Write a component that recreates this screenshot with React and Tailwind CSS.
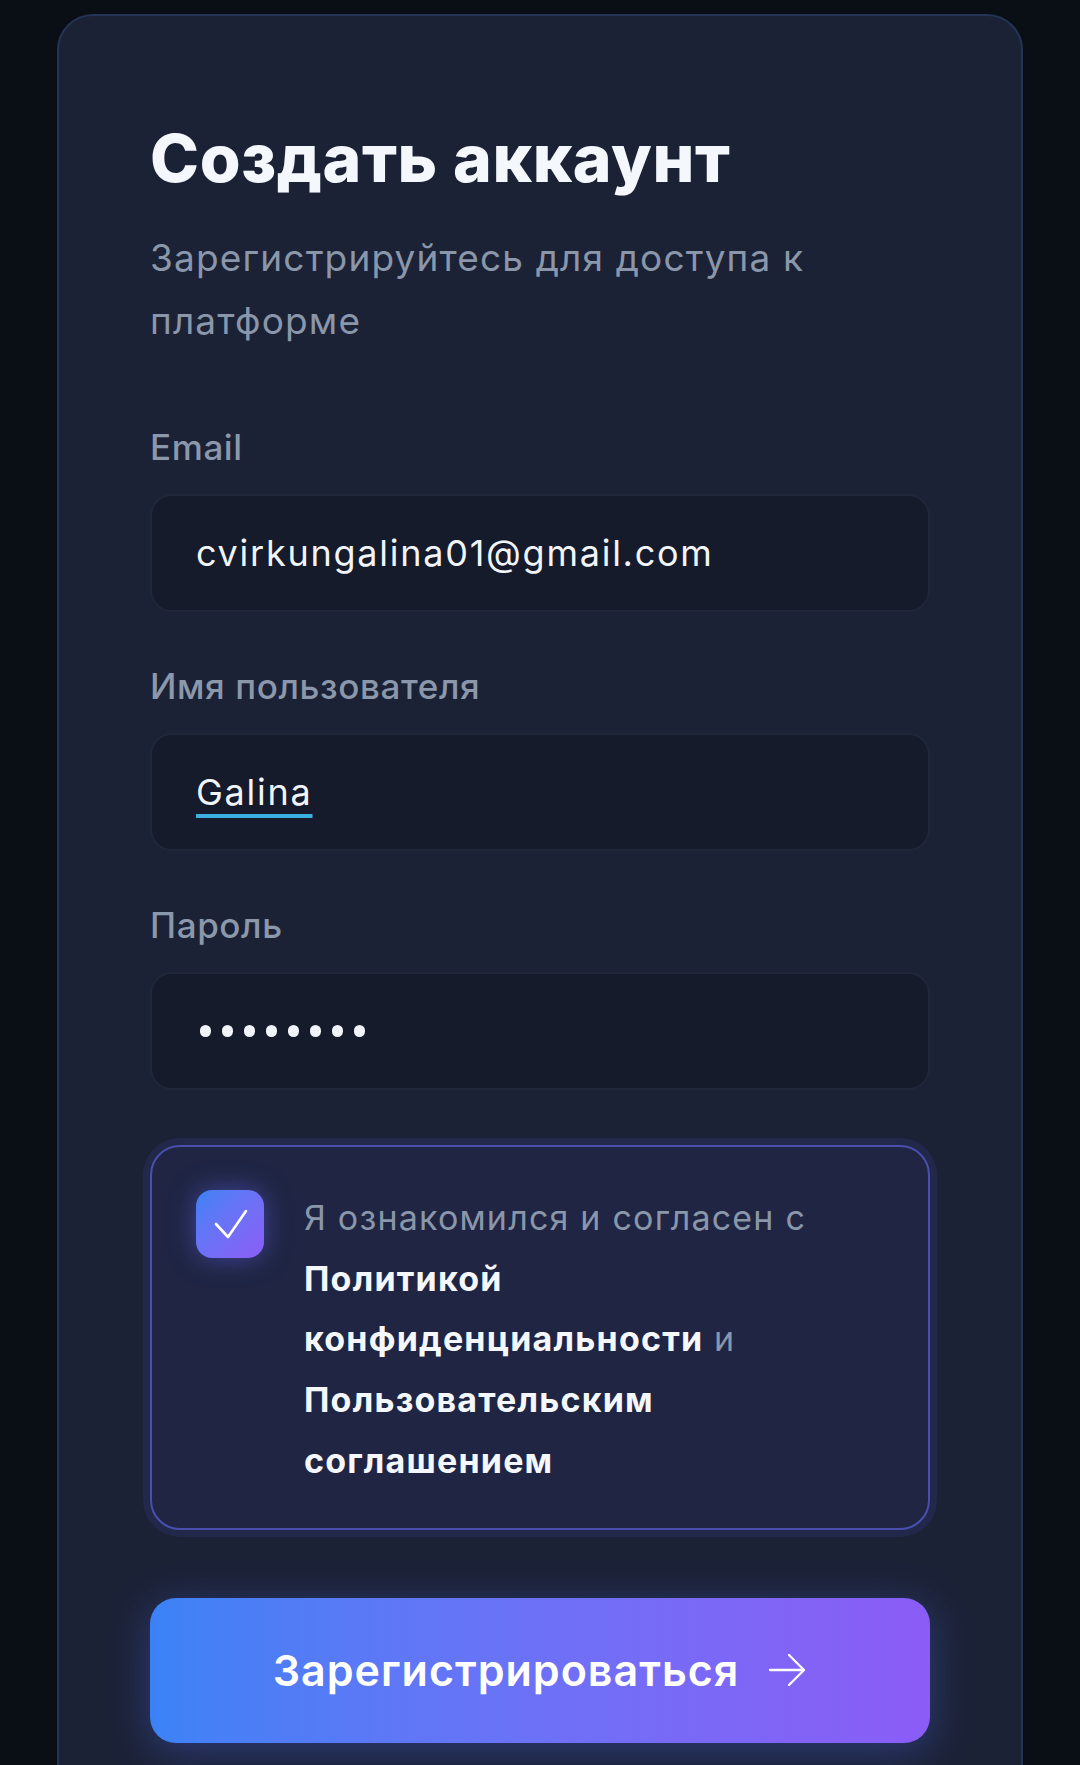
import React from "react";

function Label({ children }) {
  return (
    <div className="h-[44px] flex items-center text-[35px] leading-none tracking-[0.6px] text-[#8b97aa] font-medium">
      {children}
    </div>
  );
}

function Field({ label, children, className = "" }) {
  return (
    <div className={className}>
      <Label>{label}</Label>
      <div className="mt-[25px] h-[118px] rounded-[22px] border-2 border-[#1f2739] bg-[#151b2b] pl-[44px] flex items-center text-[36px] tracking-[1.75px] text-[#f1f5f9]">
        {children}
      </div>
    </div>
  );
}

export default function App() {
  return (
    <div
      className="h-[1765px] overflow-hidden bg-[#0a0e15] px-[57px] pt-[14px]"
      style={{ fontFamily: "Inter, 'Noto Sans', sans-serif" }}
    >
      <div className="h-[1800px] rounded-[36px] border-2 border-[#233454] bg-[#1c2236] px-[91px] pt-[109px]">
        <h1 className="text-[66px] leading-none font-extrabold tracking-[0.6px] text-[#f4f7fb]">
          Создать аккаунт
        </h1>
        <p className="mt-[35px] text-[37px] leading-[63px] tracking-[1.15px] text-[#8a96a9]">
          Зарегистрируйтесь для доступа к платформе
        </p>

        <Field label="Email" className="mt-[73px]">
          cvirkungalina01@gmail.com
        </Field>

        <Field label="Имя пользователя" className="mt-[52px]">
          <span className="underline decoration-[#3ab0e0] decoration-[4px] underline-offset-[9px]">
            Galina
          </span>
        </Field>

        <Field label="Пароль" className="mt-[52px]">
          <div className="flex gap-[11px] pl-[4px]">
            {Array.from({ length: 8 }).map((_, i) => (
              <span key={i} className="block w-[11px] h-[12px] rounded-full bg-[#f1f5f9]" />
            ))}
          </div>
        </Field>

        <div className="mt-[55px] rounded-[30px] border-2 border-[#4a4fae] bg-[#1f2543] shadow-[0_0_0_7px_#22284a] pl-[44px] pr-[44px] pt-[41px] pb-[36px] flex gap-[40px]">
          <div className="mt-[2px] shrink-0 w-[68px] h-[68px] rounded-[16px] bg-gradient-to-br from-[#3b82f6] to-[#8b5cf6] shadow-[0_0_26px_rgba(99,102,241,0.5)]">
            <svg width="68" height="68" viewBox="0 0 68 68" fill="none" stroke="white" strokeWidth="2.6" strokeLinecap="round" strokeLinejoin="round">
              <path d="M20 34l12 13L50 21" />
            </svg>
          </div>
          <p className="max-w-[548px] text-[34px] leading-[60.7px] tracking-[1.2px] text-[#8a96a9]">
            Я ознакомился и согласен с{" "}
            <span className="font-bold text-[#f4f7fb]">Политикой конфиденциальности</span>{" "}
            и{" "}
            <span className="font-bold text-[#f4f7fb]">Пользовательским соглашением</span>
          </p>
        </div>

        <button className="mt-[68px] w-full h-[145px] rounded-[26px] bg-gradient-to-r from-[#3b82f6] to-[#8b5cf6] flex items-center justify-center gap-[28px] text-white text-[43px] tracking-[1px] font-semibold shadow-[0_8px_40px_rgba(79,110,246,0.35)]">
          <span>Зарегистрироваться</span>
          <svg width="40" height="34" viewBox="0 0 40 34" fill="none" stroke="white" strokeWidth="2.3" strokeLinecap="round" strokeLinejoin="round">
            <path d="M3 17h34M22 2l15 15-15 15" />
          </svg>
        </button>
      </div>
    </div>
  );
}
